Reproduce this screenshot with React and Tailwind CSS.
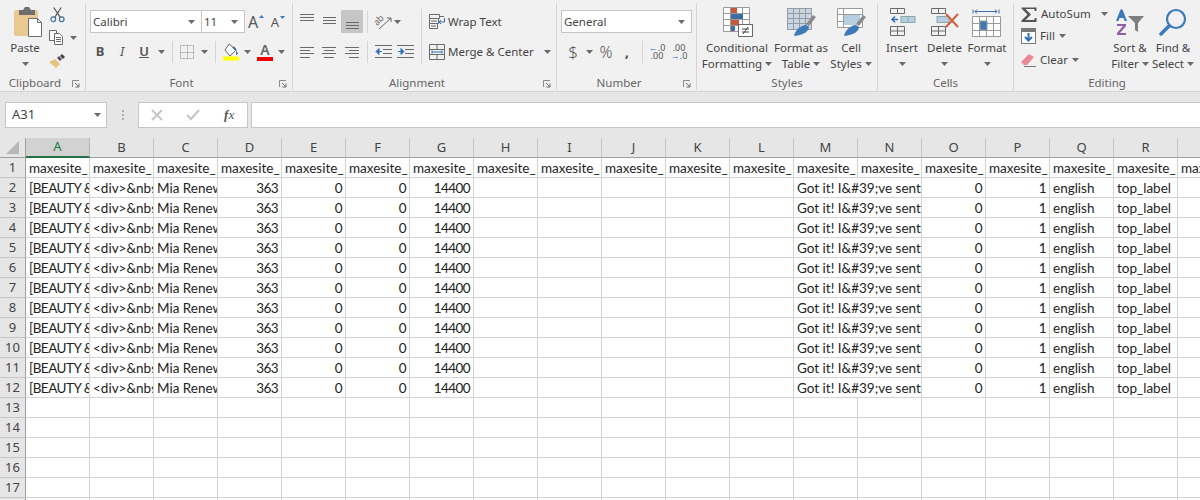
const uiFont = { fontFamily: '"Noto Sans", "Open Sans", sans-serif' };

const Caret = ({ className = "" }) => (
  <svg width="7" height="4" viewBox="0 0 7 4" className={className}>
    <path d="M0 0h7L3.5 4z" fill="#6a6a6a" />
  </svg>
);

const Sep = ({ className = "h-[22px]" }) => <div className={`w-px bg-[#d4d4d4] ${className}`} />;

const Slot = ({ className = "w-[22px]", children }) => (
  <div className={`flex h-[23px] shrink-0 items-center justify-center ${className}`}>{children}</div>
);

const CaretSlot = ({ className = "" }) => (
  <Slot className={`w-[12px] ${className}`}>
    <Caret />
  </Slot>
);

const Launcher = () => (
  <svg width="8" height="8" viewBox="0 0 8 8" className="mt-[2px]">
    <path d="M0.5 7V0.5H7" fill="none" stroke="#8a8a8a" />
    <path d="M3 3l3.5 3.5M7 3.5V7H3.5" fill="none" stroke="#6a6a6a" />
  </svg>
);

function Group({ width, label, launcher, children }) {
  return (
    <div className={`mt-[3px] h-[87px] shrink-0 border-r border-[#d4d4d4] ${width}`}>
      <div className="flex h-[73px]">{children}</div>
      <div className="flex h-[14px] items-center text-[11.5px] leading-[14px] text-[#666]">
        <div className="flex-1 text-center">{label}</div>
        {launcher && (
          <div className="flex w-[15px] justify-start pl-[2px]">
            <Launcher />
          </div>
        )}
      </div>
    </div>
  );
}

function Combo({ width, text, className = "" }) {
  return (
    <div className={`flex h-[23px] items-center justify-between border border-[#c6c6c6] bg-white pl-[2px] pr-[6px] text-[11.5px] text-[#444] ${width} ${className}`}>
      <span>{text}</span>
      <Caret />
    </div>
  );
}

function LargeButton({ width, icon, lines, caretOwnLine, className = "" }) {
  return (
    <div className={`flex shrink-0 flex-col items-center ${width} ${className}`}>
      <div className="flex h-[30px] w-full items-center justify-center">{icon}</div>
      <div className="mt-[3px] flex flex-col items-center whitespace-nowrap text-[11.5px] leading-[16px] text-[#444]">
        <div>{lines[0]}</div>
        {caretOwnLine ? (
          <div className="flex h-[16px] items-center">
            <Caret />
          </div>
        ) : (
          <div className="flex items-center gap-[3px]">
            {lines[1]}
            <Caret />
          </div>
        )}
      </div>
    </div>
  );
}

const Lines = ({ rows }) => (
  <svg width="15" height="16" viewBox="0 0 15 16">
    {rows.map(([x1, x2, y], i) => (
      <path key={i} d={`M${x1} ${y}H${x2}`} stroke="#6a6a6a" />
    ))}
  </svg>
);

const PasteIcon = () => (
  <svg width="30" height="30" viewBox="0 0 30 30" className="ml-[5px]">
    <rect x="1" y="3" width="24" height="26" rx="2" fill="#e9c98f" />
    <path d="M6 3h4l2-3h4l2 3h4v5H6z" fill="#6e6e6e" />
    <path d="M15.5 11.500h9l4 4v14h-13z" fill="#fff" stroke="#6e6e6e" />
    <path d="M24.500 11.500v4h4" fill="none" stroke="#6e6e6e" />
  </svg>
);

const Scissors = () => (
  <svg width="15" height="16" viewBox="0 0 16 16" fill="none" stroke="#44729c" strokeWidth="1.300">
    <circle cx="3.500" cy="12.500" r="2.500" />
    <circle cx="12.500" cy="12.500" r="2.500" />
    <path d="M5 10.500L12 0M11 10.500L4 0" stroke="#555" />
  </svg>
);

const CopyIcon = () => (
  <svg width="15" height="15" viewBox="0 0 15 15" fill="#fff" stroke="#6a6a6a">
    <path d="M0.500 0.500h7v10h-7z" />
    <path d="M5.500 3.500h5l3 3v8h-8z" />
    <path d="M7 7.500h5M7 9.500h5M7 11.500h5" />
  </svg>
);

const Painter = () => (
  <svg width="16" height="14" viewBox="0 0 16 14">
    <path d="M0 8l6-3 5 5-4 4C5 12 2 10 0 8z" fill="#e6c27e" />
    <path d="M8 4l2-2 3 3-2 2z" fill="#555" />
    <path d="M11 2l2-2 3 3-2 2z" fill="#444" />
  </svg>
);

const BorderIcon = () => (
  <svg width="14" height="14" viewBox="0 0 14 14" fill="none" stroke="#888" strokeDasharray="1 1">
    <path d="M0.500 0.500h13v13h-13zM7.500 0.500v13M0.500 7.500h13" />
  </svg>
);

const FillIcon = () => (
  <svg width="18" height="18" viewBox="0 0 18 18">
    <path d="M7 1l7 6-6 6-5-6z" fill="#fff" stroke="#666" />
    <path d="M14 7l2 4-2 1z" fill="#3d6ea5" />
    <path d="M11 4l3 3" stroke="#3d6ea5" strokeWidth="2" />
    <rect x="1" y="13.500" width="16" height="4" fill="#ffff00" />
  </svg>
);

const FontColor = () => (
  <div className="relative flex h-[18px] w-[16px] flex-col items-center">
    <span className="text-[14px] font-semibold leading-[14px] text-[#666]">A</span>
    <span className="h-[4px] w-[16px] bg-[#f00000]" />
  </div>
);

const GrowFont = ({ small }) => (
  <div className="flex items-start gap-[1px] text-[#555]">
    <span className={small ? "text-[13px] leading-[14px]" : "text-[16px] leading-[16px]"}>A</span>
    <svg width="5" height="3" viewBox="0 0 5 3" className="mt-[1px]">
      <path d={small ? "M0 0h5L2.500 3z" : "M0 3h5L2.500 0z"} fill="#3d7ab8" />
    </svg>
  </div>
);

const Orientation = () => (
  <svg width="18" height="18" viewBox="0 0 18 18" fill="none" stroke="#666">
    <text x="0" y="10" fontSize="9" fill="#666" stroke="none" transform="rotate(-45 5 8)">ab</text>
    <path d="M5 16L17 5M17 5v4M17 5h-4" />
  </svg>
);

const IndentIcon = ({ right }) => (
  <svg width="17" height="14" viewBox="0 0 17 14">
    <path d="M0 0.500h17M8 4.500h9M8 8.500h9M0 12.500h17" stroke="#6a6a6a" />
    {right ? (
      <path d="M1 6.500h4M4 3.500l3 3-3 3z" fill="#2f6fb5" stroke="#2f6fb5" />
    ) : (
      <path d="M7 6.500H3M4 3.500l-3 3 3 3z" fill="#2f6fb5" stroke="#2f6fb5" />
    )}
  </svg>
);

const WrapIcon = () => (
  <svg width="16" height="15" viewBox="0 0 16 15" fill="none" stroke="#6a6a6a">
    <path d="M0.500 0.500h10v4h-10zM0.500 4.500h9v5h-9zM0.500 9.500h8v5h-8zM2 7h6M2 12h5" />
    <path d="M11 2.500h4" stroke="#6a6a6a" />
    <path d="M15.500 4v4h-5M12 6l-2 2 2 2" stroke="#2f6fb5" />
  </svg>
);

const MergeIcon = () => (
  <svg width="16" height="16" viewBox="0 0 16 16" fill="none" stroke="#6a6a6a">
    <path d="M0.500 0.500h15v15h-15zM0.500 5.500h15M0.500 10.500h15M8 0.500v5M8 10.500v5" />
    <path d="M3 8h10M3 6.500v3M13 6.500v3" stroke="#2f6fb5" />
  </svg>
);

const CondFormatIcon = () => (
  <svg width="32" height="30" viewBox="0 0 32 30">
    <path d="M2.500 0.500h26v24h-26zM9.500 0.500v24M21.500 0.500v24M2.500 6.500h26M2.500 12.500h26M2.500 18.500h26" fill="#fff" stroke="#9a9a9a" />
    <rect x="10" y="1" width="6" height="5" fill="#c9593c" />
    <rect x="10" y="7" width="12" height="5" fill="#3d6ea5" />
    <rect x="10" y="13" width="8" height="5" fill="#c9593c" />
    <rect x="10" y="19" width="4" height="5" fill="#3d6ea5" />
    <rect x="17.500" y="17.500" width="14" height="12" fill="#fff" stroke="#6a6a6a" />
    <path d="M21 22h7M21 25h7M27 20l-5 7" stroke="#444" fill="none" />
  </svg>
);

const FormatTableIcon = ({ cell }) => (
  <svg width="30" height="30" viewBox="0 0 30 30">
    {cell ? (
      <>
        <path d="M1.500 1.500h25v19h-25zM1.500 7.500h25M7.500 1.500v19M1.500 14.500h25" fill="#fff" stroke="#9a9a9a" />
        <rect x="8" y="8" width="16" height="10" fill="#b7cde2" />
      </>
    ) : (
      <>
        <path d="M1.500 1.500h24v21h-24z" fill="#c6d6e6" stroke="#9a9a9a" />
        <path d="M1.500 1.500h24v5h-24zM7.500 1.500v21M13.500 1.500v21M19.500 1.500v21M1.500 11.500h24M1.500 16.500h24" fill="none" stroke="#9a9a9a" />
      </>
    )}
    <path d="M20 17l7-9 3 2-7 9z" fill="#8a8a8a" />
    <path d="M8 29c1-6 7-11 12-11l3 2c0 4-5 8-15 9z" fill="#3d7ab8" />
  </svg>
);

const InsertIcon = () => (
  <svg width="27" height="28" viewBox="0 0 27 28" fill="none" stroke="#6a6a6a">
    <path d="M1.500 0.500h14v5h-14zM8.500 0.500v5" />
    <path d="M1.500 18.500h14v9h-14zM8.500 18.500v9M1.500 23h14" />
    <rect x="12" y="8.500" width="14" height="6" fill="#b7cde2" stroke="#8aa" />
    <path d="M19 8.500v6" stroke="#8aa" />
    <path d="M9 11.500H3M6 8.500l-3 3 3 3" stroke="#2f6fb5" strokeWidth="1.500" />
  </svg>
);

const DeleteIcon = () => (
  <svg width="30" height="28" viewBox="0 0 30 28" fill="none" stroke="#6a6a6a">
    <path d="M1.500 0.500h14v5h-14zM8.500 0.500v5" />
    <path d="M1.500 18.500h14v9h-14zM8.500 18.500v9M1.500 23h14" />
    <rect x="7" y="8.500" width="12" height="6" fill="#b7cde2" stroke="#8aa" />
    <path d="M16 6l12 13M28 6L16 19" stroke="#d2603f" strokeWidth="2" />
  </svg>
);

const FormatIcon = () => (
  <svg width="30" height="30" viewBox="0 0 30 30" fill="none" stroke="#9a9a9a">
    <path d="M1 2.500v4M27 2.500v4M3 4.500h22M3 4.500l2-2M3 4.500l2 2M25 4.500l-2-2M25 4.500l-2 2" stroke="#3d6ea5" />
    <path d="M0.500 9.500h28v20h-28zM7.500 9.500v20M14.500 9.500v20M21.500 9.500v20M0.500 16.500h28M0.500 23.500h28" fill="#fff" />
    <rect x="8" y="14" width="7" height="9" fill="#3d7ab8" />
  </svg>
);

const Sigma = () => (
  <svg width="16" height="15" viewBox="0 0 16 15">
    <path d="M0.500 0.500h15v3.500h-1.500l-1-2H4.500l5.500 5.500-5.500 5.500h8.500l1-2h1.500v4H0.500v-1.500l6-6-6-6z" fill="#555" />
  </svg>
);

const FillDown = () => (
  <svg width="15" height="16" viewBox="0 0 15 16">
    <rect x="0.500" y="0.500" width="14" height="15" fill="#fff" stroke="#7a7a7a" />
    <rect x="1" y="1" width="13" height="3" fill="#777" />
    <path d="M7.500 5v7M4 9l3.500 3.500L11 9" fill="none" stroke="#2f6fb5" strokeWidth="2" />
  </svg>
);

const Eraser = () => (
  <svg width="15" height="14" viewBox="0 0 15 14">
    <path d="M0 9l7-7 1-1 5 3-7 8H3z" fill="#e88a97" />
    <path d="M3 13.500h12" stroke="#777" />
  </svg>
);

const SortIcon = () => (
  <svg width="30" height="27" viewBox="0 0 30 27">
    <path d="M1 12L5.500 0.500h2L12 12h-2.500l-1-3h-4l-1 3z" fill="#3d7ab8" />
    <path d="M2 15h9v2l-6 7h6v2H2v-2l6-7H2z" fill="#8e5fa8" />
    <path d="M13 7h16l-6 7v9l-3-2v-7z" fill="#7f7f7f" />
  </svg>
);

const FindIcon = () => (
  <svg width="28" height="28" viewBox="0 0 28 28" fill="none">
    <circle cx="17" cy="11" r="9" stroke="#3d7ab8" strokeWidth="2.200" />
    <path d="M10 18L2 26" stroke="#3d7ab8" strokeWidth="3.500" strokeLinecap="round" />
  </svg>
);

function Ribbon() {
  return (
    <div className="flex h-[92px] overflow-hidden border-b border-[#d4d4d4] bg-[#f1f1f1]" style={uiFont}>
      <Group width="w-[86px]" label="Clipboard" launcher>
        <LargeButton width="w-[50px]" className="pt-[4px]" icon={<PasteIcon />} lines={["Paste"]} caretOwnLine />
        <div className="flex w-[30px] flex-col items-start pt-[1px]">
          <div className="flex h-[22px] items-center">
            <Scissors />
          </div>
          <div className="-ml-px flex h-[23px] items-center gap-[6px]">
            <CopyIcon />
            <Caret />
          </div>
          <div className="-ml-px flex h-[24px] items-center">
            <Painter />
          </div>
        </div>
      </Group>

      <Group width="w-[207px]" label="Font" launcher>
        <div className="flex flex-col gap-[7px] pl-[3px] pt-[7px]">
          <div className="flex items-center">
            <Combo width="ml-[1px] w-[112px]" text="Calibri" />
            <Combo width="-ml-px w-[44px]" text="11" />
            <Slot><GrowFont /></Slot>
            <Slot><GrowFont small /></Slot>
          </div>
          <div className="flex items-center">
            <Slot><span className="text-[13px] font-bold text-[#555]">B</span></Slot>
            <Slot><span className="text-[13px] italic text-[#555]">I</span></Slot>
            <Slot><span className="text-[13px] font-semibold text-[#555] underline">U</span></Slot>
            <CaretSlot />
            <Sep className="ml-[5px] h-[22px]" />
            <Slot className="ml-[3px] w-[22px]"><BorderIcon /></Slot>
            <CaretSlot />
            <Sep className="ml-[5px] h-[22px]" />
            <Slot className="ml-[4px] w-[22px]"><FillIcon /></Slot>
            <CaretSlot className="-ml-px" />
            <Slot className="ml-px w-[22px]"><FontColor /></Slot>
            <CaretSlot className="-ml-px" />
          </div>
        </div>
      </Group>

      <Group width="w-[264px]" label="Alignment" launcher>
        <div className="flex flex-col gap-[7px] pl-[3px] pt-[7px]">
          <div className="flex items-center">
            <Slot><Lines rows={[[0, 14, 0.5], [0, 14, 3.5], [0, 14, 6.5]]} /></Slot>
            <Slot><Lines rows={[[1, 14, 3.5], [1, 14, 6.5], [1, 14, 9.5]]} /></Slot>
            <Slot className="ml-px w-[22px] bg-[#c6c6c6]"><Lines rows={[[1, 14, 8.5], [1, 14, 11.5], [1, 14, 14.5]]} /></Slot>
            <Sep className="ml-[4px] h-[22px]" />
            <Slot className="ml-[4px] w-[22px]"><Orientation /></Slot>
            <CaretSlot className="-ml-[3px]" />
          </div>
          <div className="flex items-center">
            <Slot><Lines rows={[[0, 14, 3.5], [0, 10, 6.5], [0, 14, 9.5], [0, 10, 13.5]]} /></Slot>
            <Slot><Lines rows={[[0, 14, 3.5], [2, 12, 6.5], [0, 14, 9.5], [2, 12, 13.5]]} /></Slot>
            <Slot className="ml-px w-[22px]"><Lines rows={[[0, 14, 3.5], [4, 14, 6.5], [0, 14, 9.5], [4, 14, 13.5]]} /></Slot>
            <Sep className="ml-[4px] h-[22px]" />
            <div className="ml-[7px]"><IndentIcon /></div>
            <div className="ml-[5px]"><IndentIcon right /></div>
          </div>
        </div>
        <Sep className="ml-[7px] mt-[6px] h-[55px]" />
        <div className="flex flex-col gap-[7px] whitespace-nowrap pl-[7px] pt-[7px] text-[11.5px] text-[#444]">
          <div className="flex h-[23px] items-center gap-[3px]">
            <WrapIcon />
            <span>Wrap Text</span>
          </div>
          <div className="flex h-[23px] items-center gap-[3px]">
            <MergeIcon />
            <span>Merge &amp; Center</span>
            <Caret className="ml-[7px]" />
          </div>
        </div>
      </Group>

      <Group width="w-[140px]" label="Number" launcher>
        <div className="flex flex-col gap-[7px] pl-[4px] pt-[7px]">
          <Combo width="w-[131px]" text="General" />
          <div className="flex items-center pl-[1px] text-[#555]">
            <Slot><span className="text-[17px] font-light">$</span></Slot>
            <CaretSlot className="-ml-[1px]" />
            <Slot className="w-[22px]"><span className="text-[16px] font-light">%</span></Slot>
            <Slot className="w-[20px]"><span className="text-[15px] font-bold">,</span></Slot>
            <Sep className="ml-[5px] h-[22px]" />
            <Slot className="ml-[3px] w-[22px]">
              <span className="text-center text-[9px] leading-[8px]">
                <span className="text-[#2f6fb5]">←</span>.0<br />.00
              </span>
            </Slot>
            <Slot className="w-[22px]">
              <span className="text-center text-[9px] leading-[8px]">
                .00<br /><span className="text-[#2f6fb5]">→</span>.0
              </span>
            </Slot>
          </div>
        </div>
      </Group>

      <Group width="w-[181px]" label="Styles">
        <LargeButton width="w-[66px]" className="ml-[7px] pt-[4px]" icon={<CondFormatIcon />} lines={["Conditional", "Formatting"]} />
        <LargeButton width="w-[62px]" className="pt-[4px]" icon={<FormatTableIcon />} lines={["Format as", "Table"]} />
        <LargeButton width="w-[38px]" className="pt-[4px]" icon={<FormatTableIcon cell />} lines={["Cell", "Styles"]} />
      </Group>

      <Group width="w-[136px]" label="Cells">
        <LargeButton width="w-[42px]" className="ml-[3px] pt-[4px]" icon={<InsertIcon />} lines={["Insert"]} caretOwnLine />
        <LargeButton width="w-[43px]" className="pt-[4px]" icon={<DeleteIcon />} lines={["Delete"]} caretOwnLine />
        <LargeButton width="w-[42px]" className="pt-[4px]" icon={<FormatIcon />} lines={["Format"]} caretOwnLine />
      </Group>

      <Group width="w-[186px] border-r-0" label="Editing">
        <div className="w-[94px] shrink-0 pl-[7px] text-[11.5px] leading-[16px] text-[#444]">
          <div className="flex h-[22px] items-center gap-[4px]">
            <Sigma />
            <span>AutoSum</span>
            <Caret className="ml-[6px]" />
          </div>
          <div className="flex h-[22px] items-center gap-[4px]">
            <FillDown />
            <span>Fill</span>
            <Caret />
          </div>
          <div className="flex h-[26px] items-center gap-[4px]">
            <Eraser />
            <span>Clear</span>
            <Caret />
          </div>
        </div>
        <LargeButton width="w-[44px]" className="pt-[4px]" icon={<SortIcon />} lines={["Sort &", "Filter"]} />
        <LargeButton width="w-[42px]" className="pt-[4px]" icon={<FindIcon />} lines={["Find &", "Select"]} />
      </Group>
    </div>
  );
}

function FormulaBar() {
  return (
    <div className="flex h-[46px] items-start bg-[#e6e6e6] pt-[10px]" style={uiFont}>
      <div className="ml-[5px] flex h-[26px] w-[102px] items-center justify-between border border-[#c6c6c6] bg-white pl-[6px] pr-[5px] text-[13px] text-[#444]">
        <span>A31</span>
        <Caret />
      </div>
      <div className="ml-[14px] flex h-[26px] w-[4px] flex-col items-center justify-center gap-[2px]">
        <span className="h-[2px] w-[2px] bg-[#b0b0b0]" />
        <span className="h-[2px] w-[2px] bg-[#b0b0b0]" />
        <span className="h-[2px] w-[2px] bg-[#b0b0b0]" />
      </div>
      <div className="ml-[13px] flex h-[26px] w-[110px] items-center border border-[#c6c6c6] bg-white">
        <div className="flex w-[37px] justify-center">
          <svg width="12" height="12" viewBox="0 0 12 12"><path d="M1 1l10 10M11 1L1 11" stroke="#c4c4c4" strokeWidth="1.800" /></svg>
        </div>
        <div className="flex w-[36px] justify-center">
          <svg width="14" height="12" viewBox="0 0 14 12"><path d="M1 6l4 4 8-9" fill="none" stroke="#c4c4c4" strokeWidth="2.200" /></svg>
        </div>
        <div className="flex w-[36px] justify-center">
          <span className="text-[13px] italic text-[#555]" style={{ fontFamily: '"Liberation Serif", serif' }}>
            <b>f</b>x
          </span>
        </div>
      </div>
      <div className="ml-[3px] h-[26px] flex-1 border-y border-l border-[#c6c6c6] bg-white" />
    </div>
  );
}

const columns = "ABCDEFGHIJKLMNOPQRS".split("");

// which cells hold something; N is covered by the text spilling out of M
const dataRow = {
  A: "[BEAUTY & PERSONAL CARE]",
  B: "<div>&nbsp;",
  C: "Mia Renew",
  D: 363,
  E: 0,
  F: 0,
  G: 14400,
  M: "Got it! I&#39;ve sent you",
  O: 0,
  P: 1,
  Q: "english",
  R: "top_label",
};

function Cell({ value, wide, className = "" }) {
  const numeric = typeof value === "number";
  return (
    <div
      className={`h-[20px] shrink-0 overflow-hidden whitespace-nowrap border-b border-r border-[#d4d4d4] leading-[21px] ${wide ? "w-[128px]" : "w-[64px]"} ${numeric ? "pr-[3px] text-right tracking-[-0.6px]" : "pl-[3px] text-left"} ${className}`}
    >
      {value}
    </div>
  );
}

function Sheet() {
  const rows = Array.from({ length: 18 }, (_, i) => i + 1);
  return (
    <div className="bg-white text-[13.5px] text-[#222]" style={{ fontFamily: 'Lato, "Noto Sans", sans-serif' }}>
      <div className="flex h-[20px] bg-[#e6e6e6] text-[#444]" style={uiFont}>
        <div className="flex h-[20px] w-[26px] shrink-0 items-center justify-center border-b border-r border-[#9f9f9f]">
          <svg width="13" height="13" viewBox="0 0 13 13" className="ml-[-1px]"><path d="M13 0v13H0z" fill="#b8b8b8" /></svg>
        </div>
        {columns.map((c, i) => (
          <div
            key={c}
            className={`flex h-[20px] w-[64px] shrink-0 items-center justify-center border-r text-[13px] ${i === 0 ? "border-b-2 border-r-[#b5b5b5] border-b-[#217346] bg-[#d2d2d2] text-[#217346]" : "border-b border-r-[#c6c6c6] border-b-[#9f9f9f]"}`}
          >
            {c}
          </div>
        ))}
      </div>
      {rows.map((r) => (
        <div key={r} className="flex h-[20px]">
          <div
            className="flex h-[20px] w-[26px] shrink-0 items-center justify-center border-b border-r border-b-[#c6c6c6] border-r-[#9f9f9f] bg-[#e6e6e6] pt-[1px] text-[13px] text-[#444]"
            style={uiFont}
          >
            {r}
          </div>
          {columns.map((c) => {
            if (r === 1) return <Cell key={c} value="maxesite_" />;
            if (r > 12) return <Cell key={c} />;
            if (c === "N") return null;
            return (
              <Cell
                key={c}
                value={dataRow[c]}
                wide={c === "M"}
                className={c === "A" ? "tracking-[-0.5px]" : ""}
              />
            );
          })}
        </div>
      ))}
    </div>
  );
}

export default function App() {
  return (
    <div className="h-[500px] w-[1200px] overflow-hidden bg-white">
      <Ribbon />
      <FormulaBar />
      <Sheet />
    </div>
  );
}
